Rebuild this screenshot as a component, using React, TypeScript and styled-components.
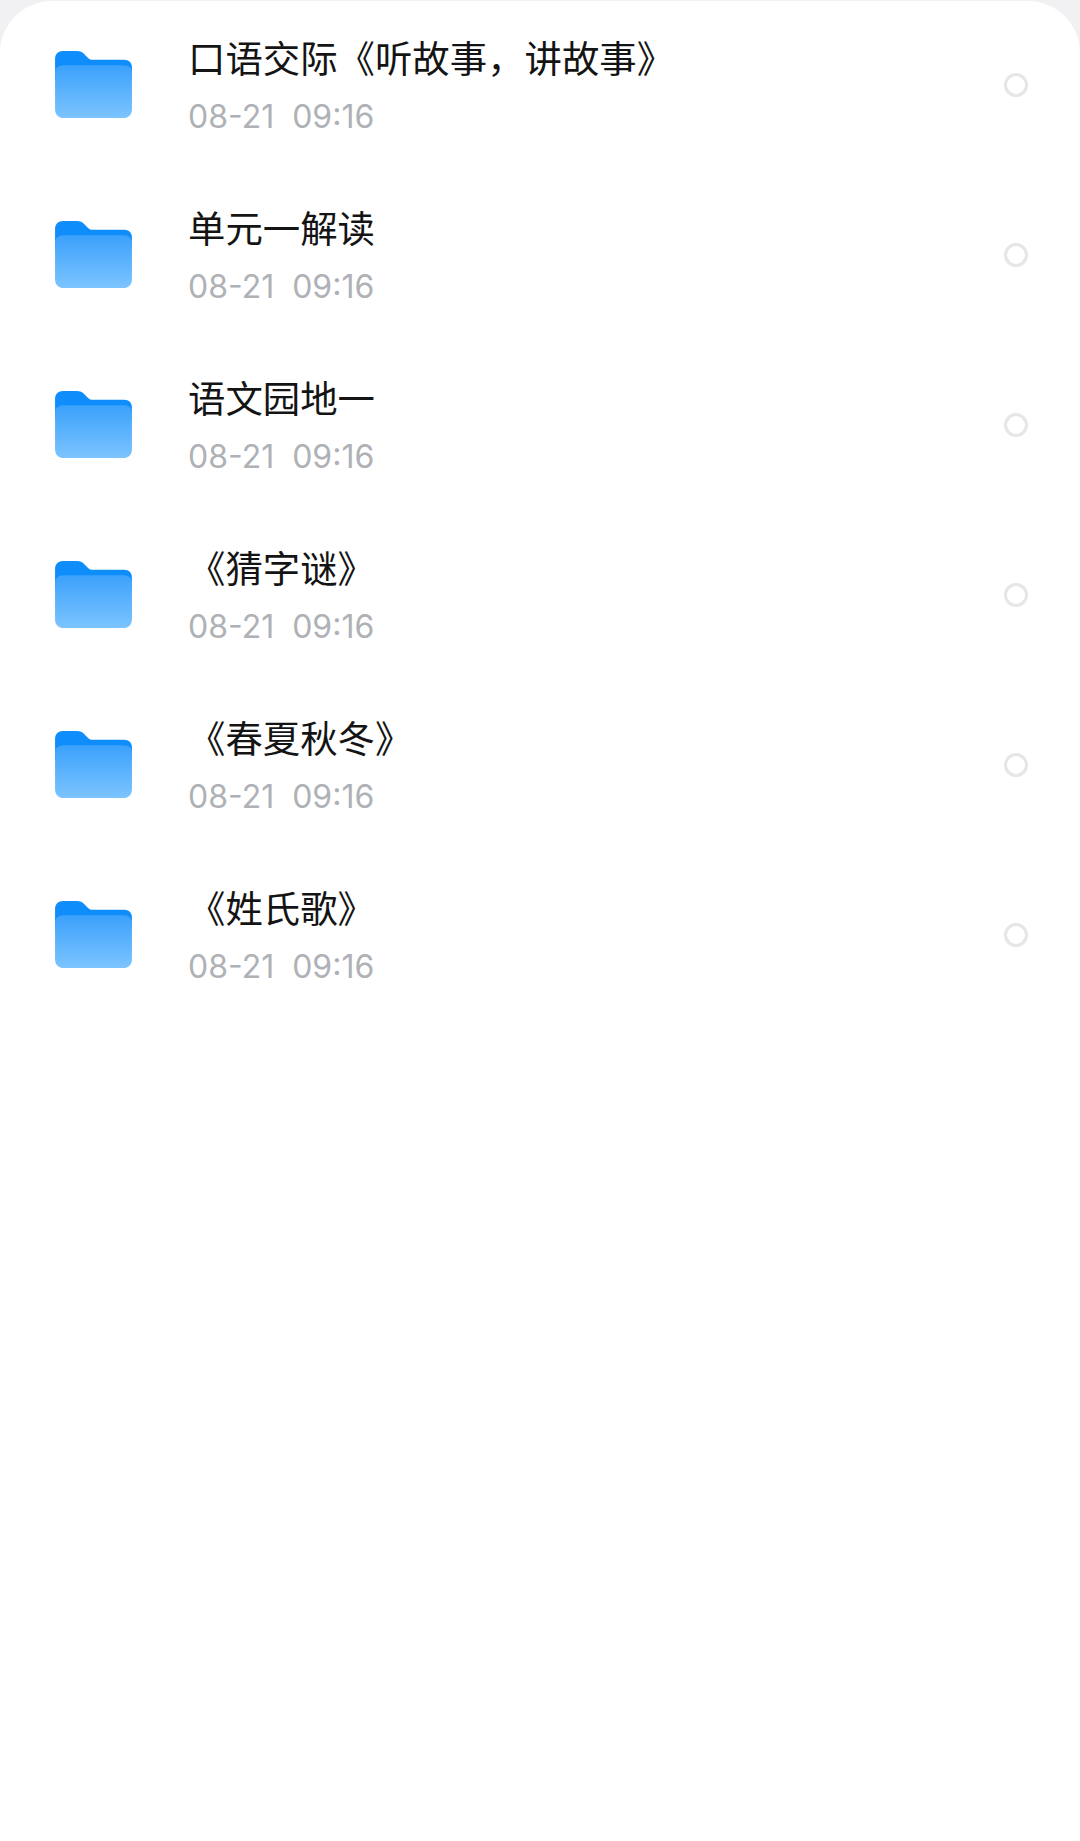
import React from 'react';
import styled, { createGlobalStyle } from 'styled-components';

const files = [
  '口语交际《听故事，讲故事》',
  '单元一解读',
  '语文园地一',
  '《猜字谜》',
  '《春夏秋冬》',
  '《姓氏歌》',
];

const GlobalStyle = createGlobalStyle`
  html, body {
    margin: 0;
    padding: 0;
    background: #f1f1f3;
  }
`;

function FolderIcon({ id }: { id: number }) {
  const gradient = `folder-front-${id}`;
  return (
    <FolderSvg viewBox="0 0 78 69" aria-hidden="true">
      <defs>
        <linearGradient id={gradient} x1="0" y1="0" x2="0" y2="1">
          <stop offset="0" stopColor="#3ba1fb" />
          <stop offset="1" stopColor="#7cc4ff" />
        </linearGradient>
      </defs>
      <path
        d="M0 9C0 4 3.500 1 8 1H22C25.500 1 27.500 2 30 4.500L33 7.500C35 9.500 36.500 10 39 10H70C75 10 78 13 78 18V30H0Z"
        fill="#0f8efb"
      />
      <path
        d="M0 23C0 18.500 3.500 15.500 8 15.500H70C74.500 15.500 78 18.500 78 23V60C78 65.500 74.500 69 69 69H9C3.500 69 0 65.500 0 60Z"
        fill={`url(#${gradient})`}
      />
    </FolderSvg>
  );
}

export default function App() {
  return (
    <>
      <GlobalStyle />
      <Sheet>
        {files.map((name, i) => (
          <Row key={name}>
            <FolderIcon id={i} />
            <Info>
              <Title>{name}</Title>
              <Time>08-21&nbsp;&nbsp;09:16</Time>
            </Info>
            <Radio />
          </Row>
        ))}
      </Sheet>
    </>
  );
}

const Sheet = styled.div`
  box-sizing: border-box;
  width: 1080px;
  height: 1840px;
  margin-top: 1px;
  background: #fff;
  border-radius: 52px 52px 0 0;
  overflow: hidden;
`;

const Row = styled.div`
  box-sizing: border-box;
  height: 170px;
  display: flex;
  align-items: center;
  padding: 0 52px 3px 55px;
`;

const FolderSvg = styled.svg`
  width: 77px;
  height: 68px;
  flex: none;
  margin-bottom: 2px;
`;

const Info = styled.div`
  flex: 1;
  min-width: 0;
  margin-left: 56px;
  display: flex;
  flex-direction: column;
  gap: 16px;
`;

const Title = styled.div`
  font-family: 'Noto Sans CJK SC', sans-serif;
  font-size: 37.400px;
  line-height: 48px;
  color: #141414;
  white-space: nowrap;
`;

const Time = styled.div`
  font-family: Inter, sans-serif;
  font-size: 32px;
  line-height: 40px;
  color: #aeb1b5;
`;

const Radio = styled.span`
  box-sizing: border-box;
  flex: none;
  width: 24px;
  height: 24px;
  border: 3px solid #e6e6e8;
  border-radius: 50%;
`;
